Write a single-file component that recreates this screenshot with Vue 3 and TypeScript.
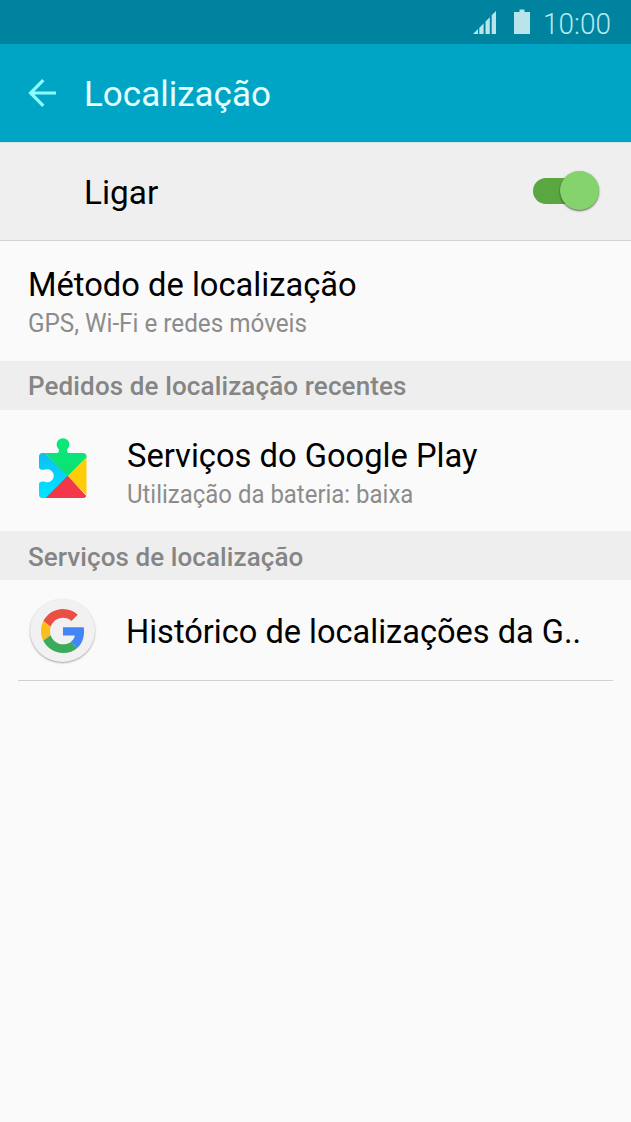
<script setup lang="ts">
import { ref } from 'vue'

const enabled = ref<boolean>(true)
</script>

<template>
  <div class="screen">
    <div class="status">
      <svg class="signal" width="24" height="24" viewBox="0 0 24 24">
        <path d="M0 23 5 18v5zM6.300 16.700l4.300-4.300v10.600h-4.300zM12.500 10.500l4.300-4.300v16.800h-4.300zM18.700 4.300l4.300-4.300v23h-4.300z" />
      </svg>
      <svg class="battery" width="16" height="25" viewBox="0 0 16 25">
        <path d="M5.500 0.500h5v2.500h5.500V25H0V3h5.500z" />
      </svg>
      <span class="clock">10:00</span>
    </div>
    <header class="bar">
      <svg class="back" width="30" height="30" viewBox="0 0 30 30">
        <path d="M15.300 2.200 2.600 15l12.700 12.800M2.600 15H28" />
      </svg>
      <h1 class="title">Localização</h1>
    </header>
    <div class="master">
      <span class="label">Ligar</span>
      <button class="switch" :class="{ on: enabled }" aria-label="Ligar" @click="enabled = !enabled">
        <span class="knob"></span>
      </button>
    </div>
    <div class="row method">
      <div class="texts">
        <div class="primary">Método de localização</div>
        <div class="secondary wide">GPS, Wi-Fi e redes móveis</div>
      </div>
    </div>
    <h2 class="section">Pedidos de localização recentes</h2>
    <div class="row play">
      <svg class="puzzle" width="50" height="62" viewBox="0 0 50 62">
        <defs>
          <clipPath id="piece">
            <path d="M3.500 15H18Q20.500 15 19.700 11.300A6.400 6.400 0 1 1 28.300 11.300Q27.500 15 30 15H44Q47.500 15 47.500 18.500V56.500Q47.500 60 44 60H3.500Q0 60 0 56.500V45.500C1.500 43.500 3.500 43.200 6.300 43.900A6.500 6.500 0 1 0 6.300 31.500C3.500 32.200 1.500 32 0 30V18.500Q0 15 3.500 15Z" />
          </clipPath>
          <linearGradient id="blue" x1="0" y1="0" x2="0" y2="1">
            <stop offset="0" stop-color="#12b8f0" />
            <stop offset="0.750" stop-color="#00dcff" />
            <stop offset="1" stop-color="#00e5ff" />
          </linearGradient>
          <linearGradient id="green" x1="0" y1="0" x2="0" y2="1">
            <stop offset="0" stop-color="#0ae87a" />
            <stop offset="1" stop-color="#0be072" />
          </linearGradient>
        </defs>
        <g clip-path="url(#piece)">
          <path fill="url(#blue)" d="M0 9 29.500 38 6 61H0z" />
          <path fill="url(#green)" d="M0 0H50V18L29 38.500 5 14z" />
          <path fill="#ffcc08" d="M48 18.500V57.500L28.700 38z" />
          <path fill="#f4354a" d="M28.700 37.800 5.500 61H50z" />
        </g>
      </svg>
      <div class="texts">
        <div class="primary">Serviços do Google Play</div>
        <div class="secondary">Utilização da bateria: baixa</div>
      </div>
    </div>
    <h2 class="section lower">Serviços de localização</h2>
    <div class="row history">
      <span class="disc">
        <svg class="logo" width="44" height="44" viewBox="0 0 48 48">
          <path fill="#EA4F43" d="M24 9.500c3.540 0 6.710 1.220 9.210 3.600l6.850-6.850C35.900 2.380 30.470 0 24 0 14.620 0 6.510 5.380 2.560 13.220l7.980 6.190C12.430 13.720 17.740 9.500 24 9.500z" />
          <path fill="#4285F4" d="M46.980 24.550c0-1.570-.15-3.090-.38-4.550H24v9.020h12.940c-.58 2.960-2.260 5.480-4.780 7.180l7.730 6c4.510-4.180 7.090-10.360 7.090-17.650z" />
          <path fill="#FBBC20" d="M10.530 28.590c-.48-1.450-.76-2.990-.76-4.590s.27-3.140.76-4.590l-7.980-6.190C.92 16.460 0 20.120 0 24c0 3.880.92 7.540 2.560 10.780z" />
          <path fill="#3BAA5A" d="M24 48c6.480 0 11.930-2.130 15.890-5.810l-7.730-6c-2.150 1.450-4.920 2.300-8.160 2.300-6.260 0-11.570-4.220-13.470-9.910l-7.980 6.190C6.510 42.620 14.620 48 24 48z" />
        </svg>
      </span>
      <div class="primary">Histórico de localizações da G..</div>
    </div>
  </div>
</template>

<style>
body {
  margin: 0;
  background: #fafafa;
}
</style>

<style scoped>
.screen {
  width: 631px;
  height: 1122px;
  overflow: hidden;
  background: #fafafa;
  font-family: Roboto, sans-serif;
  color: #000;
}
.status {
  box-sizing: border-box;
  height: 44px;
  padding: 0 20px 0 0;
  display: flex;
  justify-content: flex-end;
  align-items: flex-start;
  background: #00839f;
}
.signal,
.battery {
  fill: #b9e4ea;
}
.signal {
  margin: 11px 17px 0 0;
}
.battery {
  margin: 9px 13px 0 0;
}
.clock {
  width: 68px;
  margin-top: 6px;
  font-size: 29px;
  line-height: 36px;
  font-weight: 300;
  color: #b5eaf0;
  white-space: nowrap;
  transform: scaleX(0.965);
  transform-origin: left;
}
.bar {
  box-sizing: border-box;
  height: 98px;
  padding: 0 28px;
  display: flex;
  align-items: center;
  background: #00a5c5;
}
.back {
  width: 30px;
  margin-right: 26px;
  fill: none;
  stroke: #8ffcff;
  stroke-width: 3.2;
}
.title {
  margin: 4px 0 0;
  font-size: 35px;
  line-height: 40px;
  font-weight: 400;
  color: #e6feff;
}
.master {
  box-sizing: border-box;
  height: 99px;
  padding: 0 31px 0 84px;
  display: flex;
  align-items: center;
  justify-content: space-between;
  background: #efefef;
  border-top: 1px solid #d5e3e6;
  border-bottom: 1px solid #d4d4d4;
}
.label {
  font-size: 34px;
  line-height: 40px;
  transform: scaleX(0.98);
  transform-origin: left;
}
.switch {
  width: 67px;
  height: 40px;
  padding: 0;
  border: 0;
  margin-top: -2px;
  display: flex;
  align-items: center;
  background: none;
}
.switch::before {
  content: '';
  width: 54px;
  height: 26px;
  margin-right: -27px;
  border-radius: 13px;
  background: #b5b5b5;
}
.switch.on::before {
  background: #5aa741;
}
.knob {
  width: 39px;
  height: 39px;
  border-radius: 50%;
  background: #eee;
  box-shadow: 0 1px 2px rgba(0, 0, 0, 0.6);
}
.switch.on .knob {
  background: #85d36c;
}
.row {
  box-sizing: border-box;
  display: flex;
  padding-left: 28px;
  white-space: nowrap;
}
.method {
  height: 120px;
  padding-top: 23px;
}
.play {
  height: 121px;
  padding: 25px 0 0 39px;
}
.puzzle {
  margin: 3px 37.5px 0 0;
}
.history {
  height: 101px;
  margin: 0 18px;
  padding: 1px 0 0 12px;
  align-items: center;
  border-bottom: 1px solid #d0d0d0;
}
.primary {
  font-size: 34px;
  line-height: 40px;
  transform: scaleX(0.961);
  transform-origin: left;
}
.history .primary {
  margin-top: 1px;
  transform: scaleX(0.957);
}
.secondary {
  font-size: 25px;
  line-height: 30px;
  margin-top: 5px;
  color: #8c8c8c;
  transform: scaleX(0.958);
  transform-origin: left;
}
.secondary.wide {
  transform: scaleX(0.97);
}
.section {
  box-sizing: border-box;
  height: 49px;
  margin: 0;
  padding: 2px 0 0 28px;
  font-size: 26px;
  line-height: 47px;
  font-weight: 500;
  letter-spacing: 0.12px;
  color: #858585;
  background: #eee;
}
.section.lower {
  padding-top: 3px;
  letter-spacing: 0.08px;
}
.disc {
  width: 65px;
  height: 63px;
  margin-right: 31px;
  display: flex;
  align-items: center;
  justify-content: center;
  border-radius: 50%;
  background: #f1f1f1;
  box-shadow: 0 1px 2px rgba(0, 0, 0, 0.35);
}
</style>
